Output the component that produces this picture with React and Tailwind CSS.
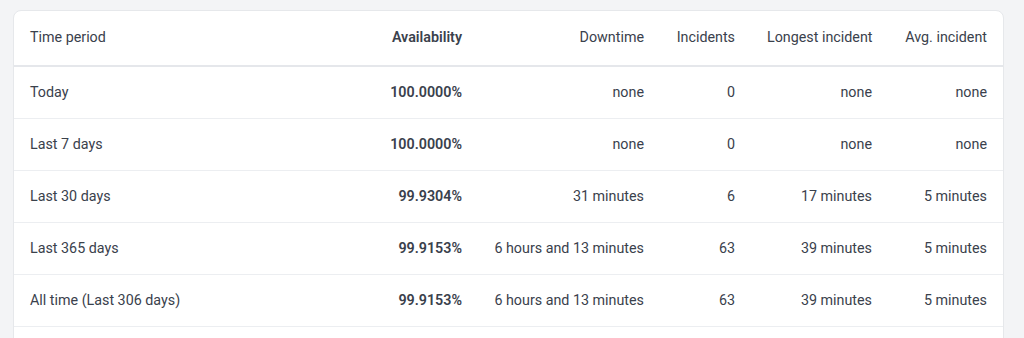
const rows = [
  { period: "Today", availability: "100.0000%", downtime: "none", incidents: "0", longest: "none", avg: "none" },
  { period: "Last 7 days", availability: "100.0000%", downtime: "none", incidents: "0", longest: "none", avg: "none" },
  { period: "Last 30 days", availability: "99.9304%", downtime: "31 minutes", incidents: "6", longest: "17 minutes", avg: "5 minutes" },
  { period: "Last 365 days", availability: "99.9153%", downtime: "6 hours and 13 minutes", incidents: "63", longest: "39 minutes", avg: "5 minutes" },
  { period: "All time (Last 306 days)", availability: "99.9153%", downtime: "6 hours and 13 minutes", incidents: "63", longest: "39 minutes", avg: "5 minutes" },
];

const cols = "grid grid-cols-[286px_178px_182px_91px_137px_115px] items-center whitespace-nowrap";

const App = () => {
  return (
    <div className="min-h-screen bg-[#f3f4f6] pt-[10px] font-['Roboto',sans-serif] text-[14.3px] text-[#3a414c]">
      <div className="ml-[13px] w-[991px] rounded-lg border border-[#e6e8eb] bg-white">
        {/* header */}
        <div className={`${cols} h-[56px] border-b-2 border-[#e5e7eb]`}>
          <div className="px-4">Time period</div>
          <div className="px-4 text-right font-semibold">Availability</div>
          <div className="px-4 text-right">Downtime</div>
          <div className="px-4 text-right">Incidents</div>
          <div className="px-4 text-right">Longest incident</div>
          <div className="px-4 text-right">Avg. incident</div>
        </div>

        {rows.map((r) => (
          <div key={r.period} className={`${cols} h-[52px] border-b border-[#eceef1] pt-px`}>
            <div className="px-4">{r.period}</div>
            <div className="px-4 text-right font-semibold">{r.availability}</div>
            <div className="px-4 text-right">{r.downtime}</div>
            <div className="px-4 text-right">{r.incidents}</div>
            <div className="px-4 text-right">{r.longest}</div>
            <div className="px-4 text-right">{r.avg}</div>
          </div>
        ))}

        <div className="h-[40px]" />
      </div>
    </div>
  );
};

export default App;
